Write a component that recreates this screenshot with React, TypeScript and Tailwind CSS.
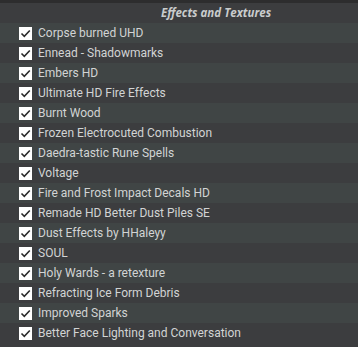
const mods = [
  "Corpse burned UHD",
  "Ennead - Shadowmarks",
  "Embers HD",
  "Ultimate HD Fire Effects",
  "Burnt Wood",
  "Frozen Electrocuted Combustion",
  "Daedra-tastic Rune Spells",
  "Voltage",
  "Fire and Frost Impact Decals HD",
  "Remade HD Better Dust Piles SE",
  "Dust Effects by HHaleyy",
  "SOUL",
  "Holy Wards - a retexture",
  "Refracting Ice Form Debris",
  "Improved Sparks",
  "Better Face Lighting and Conversation",
];

function CheckBox() {
  return (
    <span className="flex h-[13px] w-[13px] shrink-0 items-center justify-center bg-white">
      <svg width="11" height="11" viewBox="0 0 11 11" fill="none">
        <path
          d="M1.5 5.5 L4.3 8.3 L9.8 2.5"
          stroke="#2b2b2b"
          strokeWidth="1.6"
        />
      </svg>
    </span>
  );
}

export default function App() {
  return (
    <div className="h-[347px] w-[358px] overflow-hidden bg-[#3c3d3f] font-['Roboto',sans-serif]">
      <div className="h-[3px] bg-[#2d2d2e]" />
      <div className="flex h-[20px] items-center pl-[161px]">
        <span className="text-[11.5px] font-bold italic leading-none text-[#c9cccd] font-['Open_Sans',sans-serif]">
          Effects and Textures
        </span>
      </div>
      <div>
        {mods.map((name, i) => (
          <div
            key={name}
            className={`flex h-[20px] items-center gap-[6px] pl-[19px] ${
              i % 2 === 0 ? "bg-[#404545]" : "bg-[#3c3d3f]"
            }`}
          >
            <CheckBox />
            <span className="text-[12px] leading-none text-[#d2d4d4]">
              {name}
            </span>
          </div>
        ))}
      </div>
    </div>
  );
}
